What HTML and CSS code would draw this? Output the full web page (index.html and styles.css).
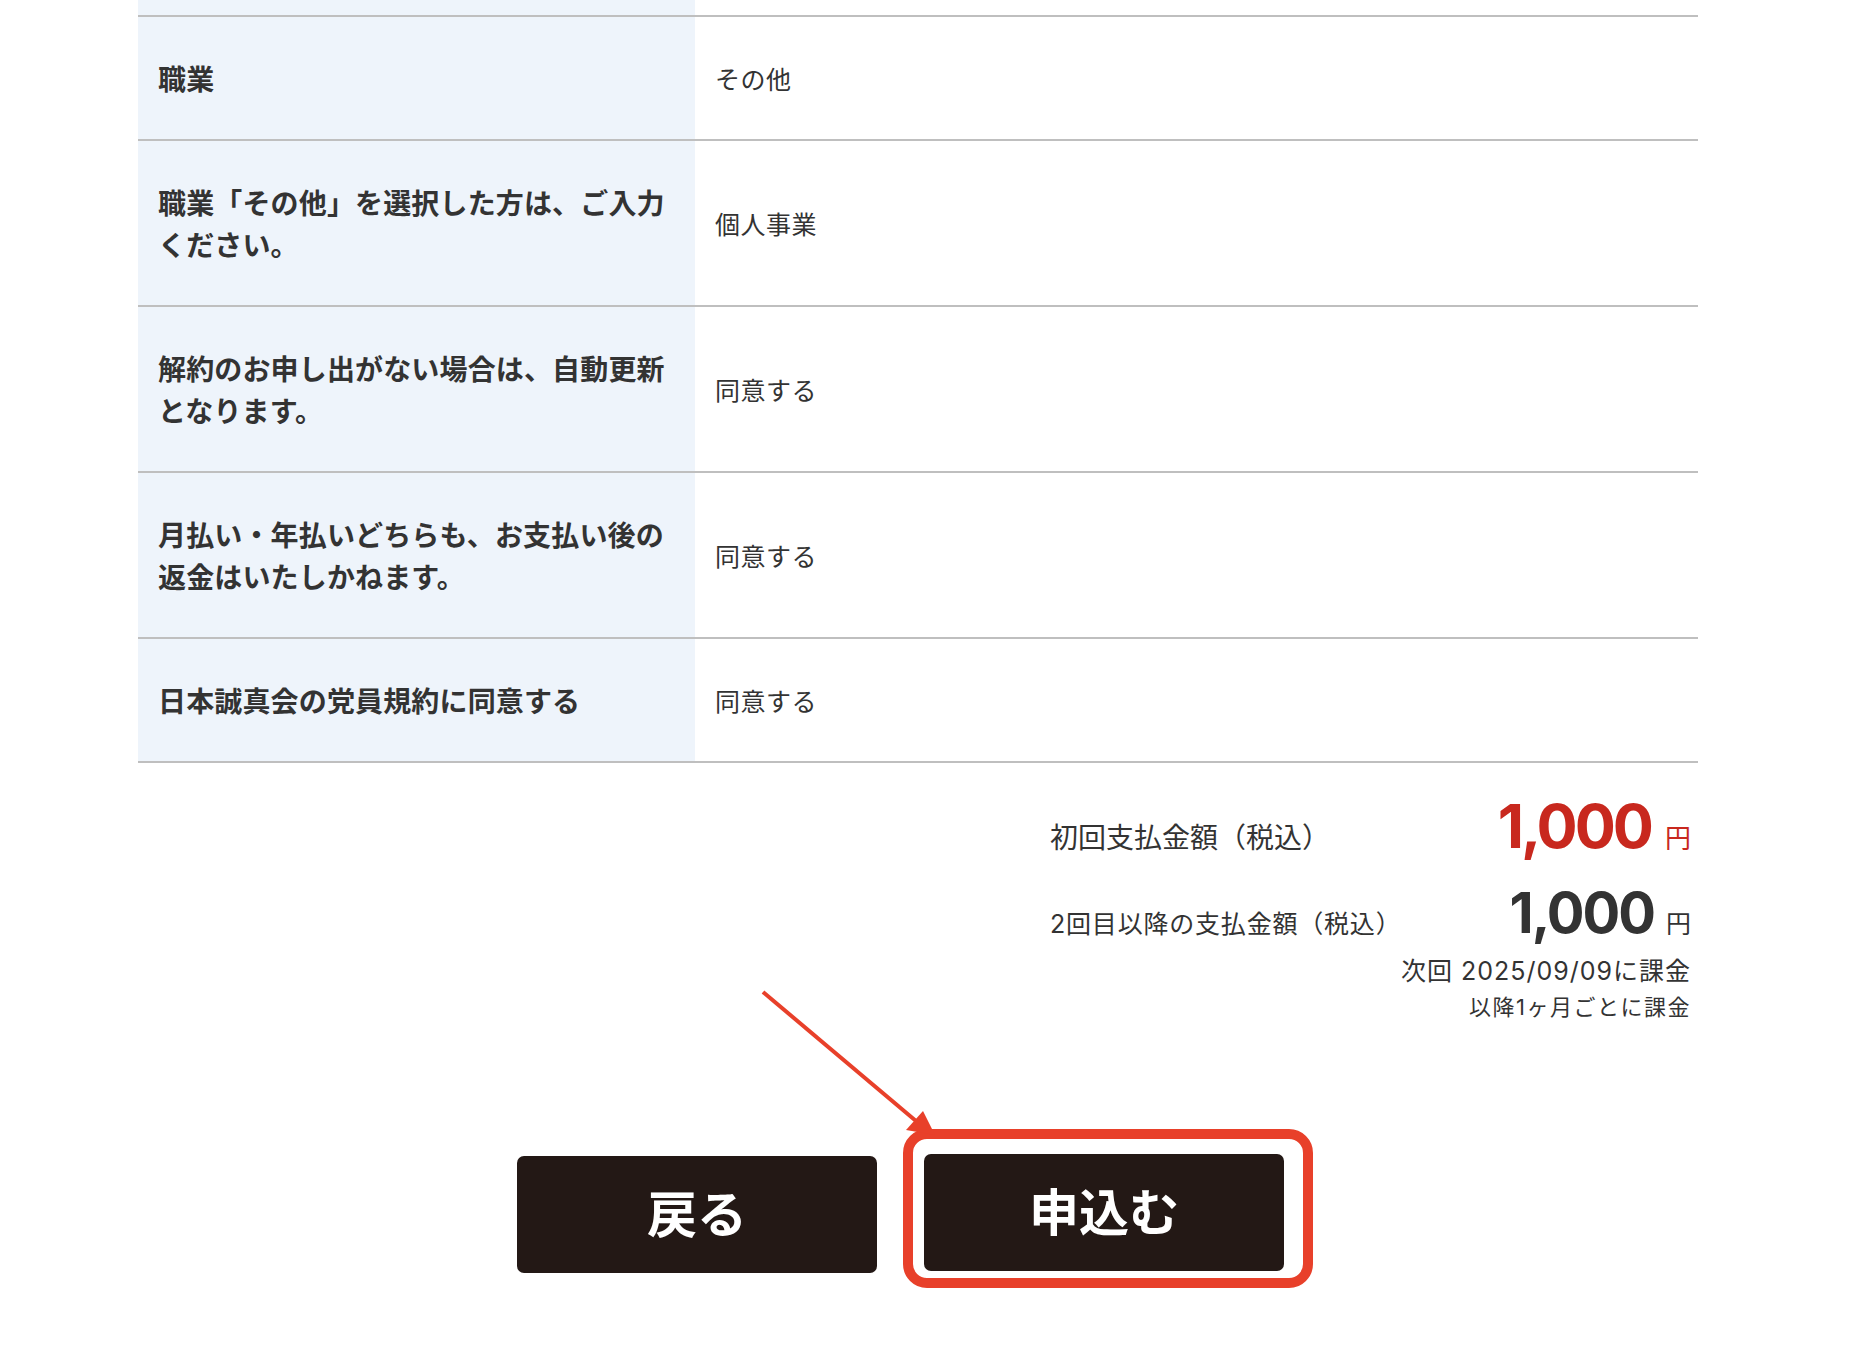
FILE: index.html
```html
<!DOCTYPE html>
<html lang="ja">
<head>
<meta charset="utf-8">
<title>申込内容の確認</title>
<link rel="stylesheet" href="styles.css">
</head>
<body>
<main class="page">
  <table class="confirm-table">
    <colgroup>
      <col class="col-label">
      <col class="col-value">
    </colgroup>
    <tbody>
      <tr class="row-cut"><th></th><td></td></tr>
      <tr><th>職業</th><td>その他</td></tr>
      <tr><th>職業「その他」を選択した方は、ご入力ください。</th><td>個人事業</td></tr>
      <tr><th>解約のお申し出がない場合は、自動更新となります。</th><td>同意する</td></tr>
      <tr><th>月払い・年払いどちらも、お支払い後の返金はいたしかねます。</th><td>同意する</td></tr>
      <tr><th>日本誠真会の党員規約に同意する</th><td>同意する</td></tr>
    </tbody>
  </table>

  <section class="summary">
    <div class="summary-row summary-row-first">
      <span class="summary-label summary-label-first">初回支払金額（税込）</span>
      <span class="amount amount-first"><span class="amount-num">1,000</span><span class="amount-unit">円</span></span>
    </div>
    <div class="summary-row summary-row-next">
      <span class="summary-label">2回目以降の支払金額（税込）</span>
      <span class="amount amount-next"><span class="amount-num">1,000</span><span class="amount-unit">円</span></span>
    </div>
    <p class="billing-note">次回 2025/09/09に課金</p>
    <p class="billing-note billing-note-sub">以降1ヶ月ごとに課金</p>
  </section>

  <div class="actions">
    <button type="button" class="btn btn-back">戻る</button>
    <div class="submit-wrap">
      <button type="submit" class="btn btn-submit">申込む</button>
      <span class="highlight-box" aria-hidden="true"></span>
      <svg class="highlight-arrow" width="190" height="170" viewBox="0 0 190 170" aria-hidden="true">
        <line x1="9" y1="8" x2="162" y2="137" stroke="#e8402a" stroke-width="4" stroke-linecap="butt"/>
        <polygon points="181,151 169,127 152,146" fill="#e8402a"/>
      </svg>
    </div>
  </div>
</main>
</body>
</html>
```

FILE: styles.css
```css
html, body {
  margin: 0;
  padding: 0;
  background: #ffffff;
}

body {
  color: #333333;
  font-family: "Noto Sans CJK JP", "Noto Sans", sans-serif;
}

.page {
  width: 1560px;
  margin-left: 138px;
  padding-bottom: 80px;
}

/* ---------- confirmation table ---------- */
.confirm-table {
  width: 1560px;
  table-layout: fixed;
  border-collapse: separate;
  border-spacing: 0;
}

.col-label {
  width: 557px;
}

.confirm-table th,
.confirm-table td {
  border-bottom: 2px solid #bfbfbf;
  padding: 40px 20px;
  vertical-align: middle;
  text-align: left;
}

.confirm-table th {
  background: #eef4fb;
  font-size: 28px;
  line-height: 42px;
  letter-spacing: 0.15px;
  font-weight: 700;
  color: #333333;
}

.confirm-table td {
  background: #ffffff;
  font-size: 25px;
  line-height: 42px;
  letter-spacing: 0.5px;
  font-weight: 400;
  color: #333333;
}

.confirm-table .row-cut th,
.confirm-table .row-cut td {
  padding: 0;
  height: 15px;
  font-size: 0;
  line-height: 0;
}

/* ---------- summary ---------- */
.summary {
  margin: 33px 0 0 912px;
  width: 641px;
  font-family: "Inter", "Noto Sans CJK JP", sans-serif;
  color: #333333;
}

.summary-row {
  display: flex;
  justify-content: space-between;
  align-items: baseline;
}

.summary-row-next {
  margin-top: 27px;
}

.summary-label {
  font-size: 25px;
  line-height: 1.4;
  letter-spacing: 0.8px;
}

.summary-label-first {
  font-size: 28px;
  letter-spacing: 0;
}

.amount {
  line-height: 1;
  white-space: nowrap;
}

.amount-num {
  font-weight: 700;
  letter-spacing: -2px;
}

.amount-unit {
  margin-left: 12px;
  font-family: "Noto Sans CJK JP", sans-serif;
  font-weight: 400;
  letter-spacing: 0;
}

.amount-first {
  font-size: 61px;
  color: #c8281e;
}

.amount-first .amount-num {
  letter-spacing: -3px;
}

.amount-first .amount-unit {
  font-size: 26px;
  margin-left: 14px;
}

.amount-next {
  font-size: 56px;
  color: #333333;
}

.amount-next .amount-unit {
  font-size: 25px;
}

.billing-note {
  margin: 11px 0 0;
  text-align: right;
  font-size: 25px;
  line-height: 36px;
  letter-spacing: 1px;
}

.billing-note-sub {
  margin-top: 0;
  font-size: 22px;
  letter-spacing: 1.5px;
}

/* ---------- actions ---------- */
.actions {
  display: flex;
  align-items: flex-start;
  gap: 47px;
  margin-top: 129px;
  padding-left: 379px;
}

.btn {
  width: 360px;
  height: 117px;
  border: 0;
  border-radius: 7px;
  background: #231815;
  color: #ffffff;
  font-family: "Noto Sans CJK JP", sans-serif;
  font-size: 50px;
  font-weight: 700;
  padding: 0 0 8px;
  cursor: pointer;
}

.btn-back {
  margin-top: 2px;
}

.submit-wrap {
  position: relative;
}

.btn-submit {
  display: block;
}

.highlight-box {
  position: absolute;
  left: -21px;
  top: -25px;
  width: 410px;
  height: 159px;
  box-sizing: border-box;
  border: 10px solid #e8402a;
  border-radius: 24px;
  pointer-events: none;
}

.highlight-arrow {
  position: absolute;
  left: -170px;
  top: -170px;
  pointer-events: none;
}
```
